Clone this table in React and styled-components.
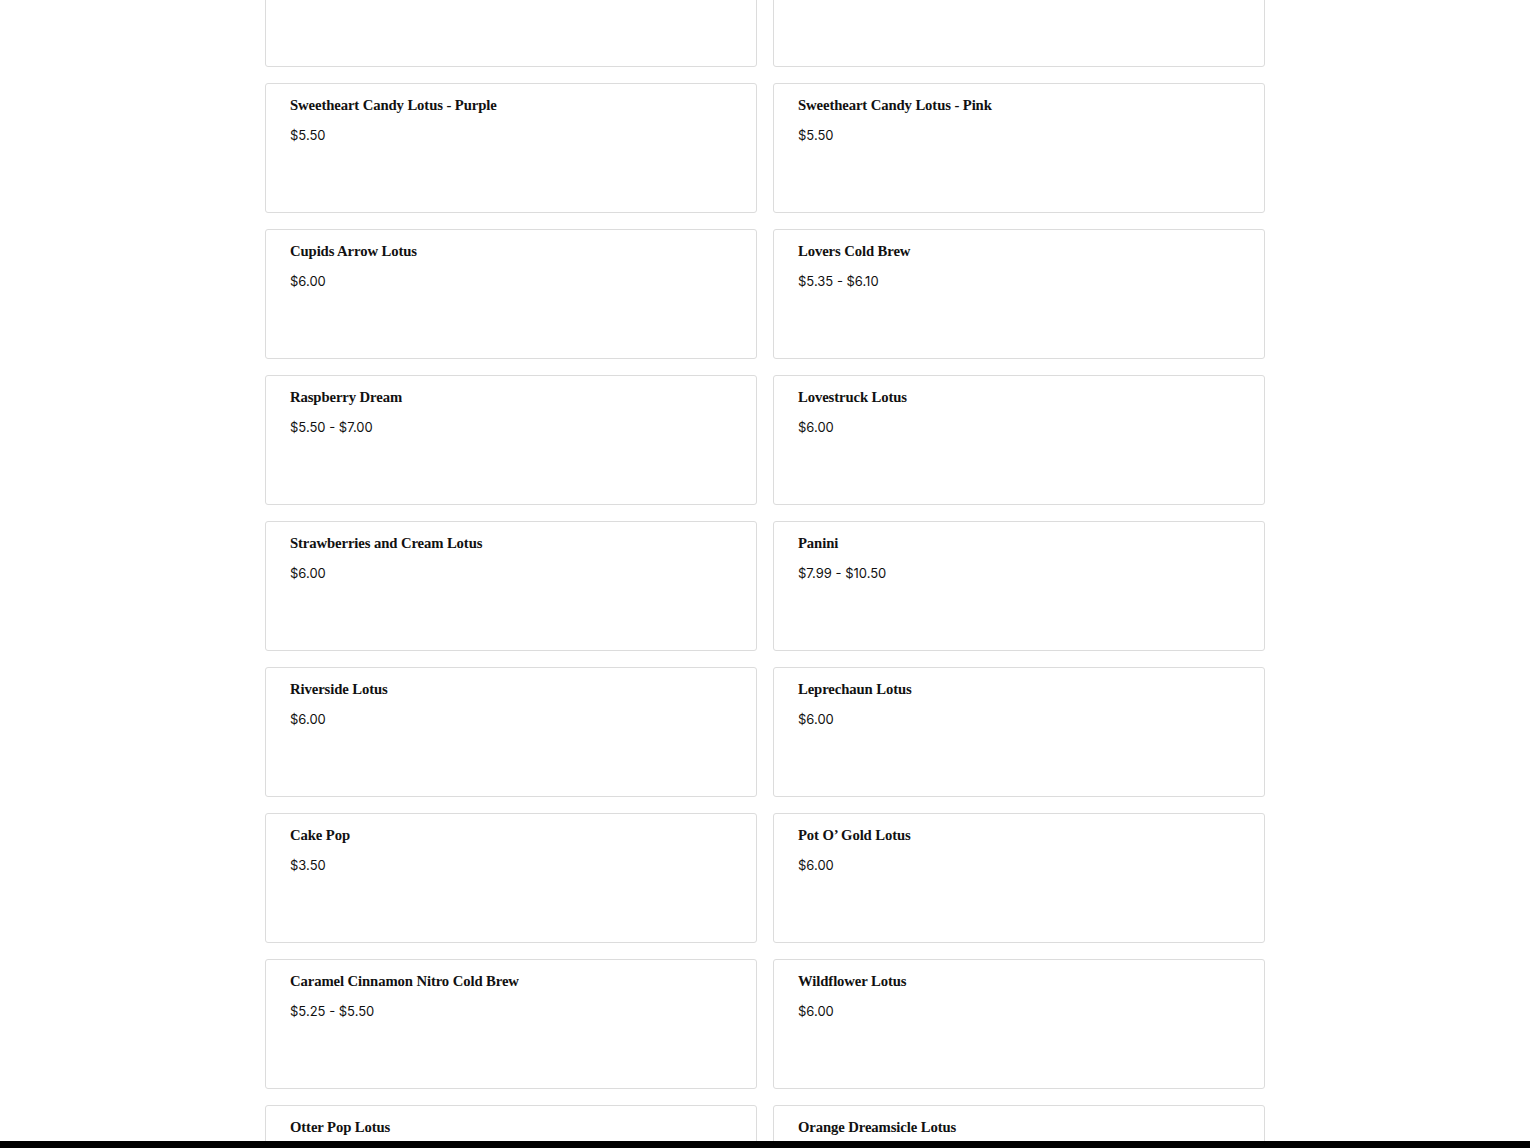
import React from "react";
import styled, { createGlobalStyle } from "styled-components";

const GlobalStyle = createGlobalStyle`
  html, body {
    margin: 0;
    padding: 0;
    background: #fff;
  }
  body {
    font-family: "Open Sans", "Liberation Sans", sans-serif;
    color: #111;
  }
`;

const Page = styled.div`
  width: 100%;
  height: 1148px;
  overflow: hidden;
`;

const MenuGrid = styled.div`
  width: 1000px;
  margin: -63px auto 0 auto;
  display: grid;
  grid-template-columns: 1fr 1fr;
  column-gap: 16px;
  row-gap: 16px;
`;

const Card = styled.div`
  box-sizing: border-box;
  height: 130px;
  border: 1px solid #dcdcdc;
  border-radius: 3px;
  padding: 11px 24px;
  display: flex;
  flex-direction: column;
  gap: 11px;
`;

const Title = styled.h3`
  margin: 0;
  font-family: "Liberation Serif", "DejaVu Serif", serif;
  font-weight: 700;
  font-size: 14.7px;
  line-height: 20px;
  color: #111;
  letter-spacing: -0.1px;
`;

const Price = styled.div`
  font-family: "Inter", "Open Sans", sans-serif;
  font-size: 13px;
  line-height: 18px;
  color: #111;
`;

const BottomBar = styled.div`
  position: fixed;
  left: 0;
  right: 0;
  bottom: 0;
  height: 7px;
  background: #000;
`;

const items = [
  { name: "", price: "" },
  { name: "", price: "" },
  { name: "Sweetheart Candy Lotus - Purple", price: "$5.50" },
  { name: "Sweetheart Candy Lotus - Pink", price: "$5.50" },
  { name: "Cupids Arrow Lotus", price: "$6.00" },
  { name: "Lovers Cold Brew", price: "$5.35 - $6.10" },
  { name: "Raspberry Dream", price: "$5.50 - $7.00" },
  { name: "Lovestruck Lotus", price: "$6.00" },
  { name: "Strawberries and Cream Lotus", price: "$6.00" },
  { name: "Panini", price: "$7.99 - $10.50" },
  { name: "Riverside Lotus", price: "$6.00" },
  { name: "Leprechaun Lotus", price: "$6.00" },
  { name: "Cake Pop", price: "$3.50" },
  { name: "Pot O’ Gold Lotus", price: "$6.00" },
  { name: "Caramel Cinnamon Nitro Cold Brew", price: "$5.25 - $5.50" },
  { name: "Wildflower Lotus", price: "$6.00" },
  { name: "Otter Pop Lotus", price: "" },
  { name: "Orange Dreamsicle Lotus", price: "" },
];

export default function App() {
  return (
    <Page>
      <GlobalStyle />
      <MenuGrid>
        {items.map((item, i) => (
          <Card key={i}>
            <Title>{item.name}</Title>
            {item.price && <Price>{item.price}</Price>}
          </Card>
        ))}
      </MenuGrid>
      <BottomBar />
    </Page>
  );
}
